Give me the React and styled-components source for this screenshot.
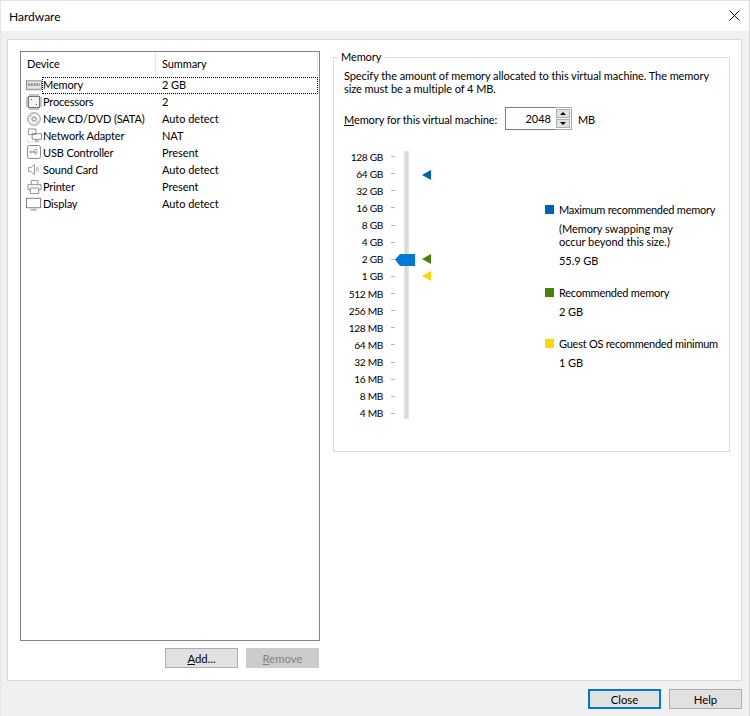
import React from "react";
import styled, { createGlobalStyle } from "styled-components";

const Global = createGlobalStyle`
  html, body { margin: 0; padding: 0; background: #f0f0f0; }
  * { box-sizing: border-box; }
  body { font-family: "Lato", "Open Sans", "Liberation Sans", sans-serif; font-size: 11px; letter-spacing: -0.1px; color: #000; }
`;

const Window = styled.div`
  position: relative; width: 750px; height: 716px; background: #f0f0f0;
  border-left: 1px solid #e6e6e6; border-right: 1px solid #d8d8d8; border-top: 1px solid #e4e4e4;
  display: flex; flex-direction: column; overflow: hidden;
`;
const EdgeMark = styled.i`
  position: absolute; left: -1px; width: 1px; display: block;
  top: ${p => p.$top}px; height: ${p => p.$h}px; background: ${p => p.$c};
`;
const TitleBar = styled.header`
  height: 30px; flex: none; background: #fff; display: flex; align-items: center;
  justify-content: space-between; padding: 0 9px 0 8px;
`;
const Title = styled.h1`margin: 0; font-size: 12px; font-weight: 400; letter-spacing: 0;`;
const CloseX = styled.svg`width: 11px; height: 11px; display: block; margin-top: -1px;`;

const Panel = styled.main`
  margin: 8px 7px 0 6px; height: 642px; flex: none; background: #fff; border: 1px solid #d9d9d9;
  padding: 11px 10px 0 12px; display: flex; gap: 13px;
`;
const LeftCol = styled.section`width: 300px; flex: none; display: flex; flex-direction: column;`;
const List = styled.div`width: 300px; height: 590px; border: 1px solid #82828e; display: flex; flex-direction: column;`;
const HeaderRow = styled.div`display: flex; height: 25px; flex: none;`;
const HeadCell = styled.div`
  width: ${p => p.$w}px; padding-left: 6px; padding-bottom: 1px; display: flex; align-items: center;
  border-right: 1px solid #e5e5e5; margin-bottom: 1px;
`;
const Rows = styled.div`display: flex; flex-direction: column;`;
const Row = styled.div`display: flex; height: 17px; padding-left: 5px; padding-right: 1px; align-items: stretch;`;
const IconBox = styled.span`width: 16px; flex: none; display: flex; align-items: center; padding-bottom: 2px; overflow: visible;`;
const Cells = styled.div`
  flex: 1; display: flex; align-items: center; padding-bottom: 3px;
  border: 1px dotted ${p => (p.$focus ? "#000" : "transparent")};
`;
const NameCell = styled.span`width: 119px; white-space: nowrap; letter-spacing: -0.15px;`;
const SummaryCell = styled.span`white-space: nowrap; letter-spacing: -0.05px;`;

const ListActions = styled.div`display: flex; justify-content: flex-end; gap: 8px; padding: 7px 1px 0 0;`;
const Btn = styled.button`
  width: 73px; height: 20px; padding: 0; font: inherit; font-size: 11.3px; letter-spacing: 0;
  color: ${p => (p.disabled ? "#838383" : "#000")};
  background: ${p => (p.disabled ? "#cccccc" : "#e1e1e1")};
  border: 1px solid ${p => (p.disabled ? "#cccccc" : "#adadad")};
  ${p => p.$primary && "border: 2px solid #0078d7;"}
  display: flex; align-items: center; justify-content: center;
  u { text-decoration: underline; text-underline-offset: 1px; }
`;

const Group = styled.fieldset`
  margin: -1px 0 0 0; width: 397px; height: 402px; border: 1px solid #dcdcdc; padding: 0 10px 0 10px; min-width: 0;
  display: block;
`;
const GroupLabel = styled.legend`padding: 0 3px; margin-left: -6px; line-height: 14px;`;
const Intro = styled.p`margin: 5px 0 0 0; line-height: 13px; width: 380px; letter-spacing: -0.07px;`;
const SpinRow = styled.div`display: flex; align-items: center; margin-top: 12px; height: 23px;`;
const SpinLabel = styled.label`width: 161px; white-space: nowrap; padding-top: 2px; u { text-underline-offset: 1px; }`;
const SpinBox = styled.div`display: flex; width: 67px; height: 23px; border: 1px solid #a8a8a8; margin-right: 6px;`;
const SpinInput = styled.div`
  width: 50px; margin: -1px 0 -1px -1px; border: 1px solid #7a7a7a; border-right: none;
  display: flex; align-items: center; justify-content: flex-end; padding-right: 4px; letter-spacing: 0;
`;
const SpinUnit = styled.span`padding-top: 2px;`;
const SpinBtns = styled.div`flex: 1; display: flex; flex-direction: column; gap: 1px; padding: 1px;`;
const SpinBtn = styled.div`
  flex: 1; background: #e1e1e1; border: 1px solid #adadad; display: flex; align-items: center; justify-content: center;
  &::after { content: ""; border-left: 3px solid transparent; border-right: 3px solid transparent;
    ${p => (p.$up ? "border-bottom: 3px solid #000;" : "border-top: 3px solid #000;")} }
`;

const Chart = styled.div`display: flex; margin-top: 18px; margin-left: -5px;`;
const Scale = styled.div`display: flex; flex-direction: column; width: 56px; flex: none;`;
const ScaleRow = styled.div`height: 17.13px; display: flex; align-items: center; justify-content: flex-end; white-space: nowrap; font-size: 10.2px; letter-spacing: -0.35px;`;
const Tick = styled.span`width: 4px; height: 1px; background: #b5b5b5; margin-left: 8px; flex: none;`;
const TrackCol = styled.div`position: relative; width: 60px; height: 274px; margin-left: 9px; flex: none;`;
const Track = styled.div`position: absolute; left: 0; top: 3px; width: 5px; height: 268px; background: #d9dcdb; border: 1px solid #e4e6e5;`;
const Thumb = styled.svg`position: absolute; left: -9px; top: 105px; width: 20px; height: 13px; display: block;`;
const Marker = styled.span`
  position: absolute; left: 18px; top: ${p => p.$top}px; width: 0; height: 0;
  border-top: 5px solid transparent; border-bottom: 5px solid transparent; border-right: 9px solid ${p => p.$c};
`;

const Legend = styled.div`
  display: flex; flex-direction: column; margin-left: 81px; padding-top: 55px; width: 175px; flex: none;
`;
const LegendItem = styled.div`display: flex; flex-direction: column; margin-bottom: ${p => p.$mb}px;`;
const LegendHead = styled.div`display: flex; align-items: center; height: 13px; white-space: nowrap; letter-spacing: -0.24px;`;
const Swatch = styled.span`width: 9px; height: 9px; background: ${p => p.$c}; margin-right: 5px; flex: none;`;
const LegendText = styled.div`margin: ${p => p.$mt}px 0 0 14px; line-height: 13px; white-space: nowrap; letter-spacing: -0.05px;`;

const Footer = styled.footer`display: flex; justify-content: flex-end; gap: 8px; padding: 8px 7px 0 0;`;

const sw = "#8a8a8a";
const Icons = {
  memory: (
    <svg width="17" height="12" viewBox="0 0 17 12" style={{ marginTop: 2 }}>
      <rect x="0.5" y="0.5" width="16" height="9" fill="#e6e6e6" stroke={sw} />
      <path d="M2 3h2v3H2zM5 3h2v3H5zM8 3h2v3H8zM11 3h2v3h-2zM14 3h1v3h-1z" fill="#8f8f8f" />
      <path d="M1 10.5h15" stroke="#b5b5b5" strokeDasharray="1 1" />
    </svg>
  ),
  cpu: (
    <svg width="16" height="16" viewBox="0 0 16 16">
      <rect x="2.5" y="2.5" width="11" height="11" fill="#f3f3f3" stroke="#777" />
      <path d="M4 0v2M6 0v2M8 0v2M10 0v2M12 0v2M4 14v2M6 14v2M8 14v2M10 14v2M12 14v2M0 4h2M0 6h2M0 8h2M0 10h2M0 12h2M14 4h2M14 6h2M14 8h2M14 10h2M14 12h2" stroke="#8a8a8a" />
      <rect x="5" y="5" width="1" height="1" fill="#555" />
      <rect x="10" y="10" width="1" height="1" fill="#555" />
    </svg>
  ),
  cd: (
    <svg width="16" height="16" viewBox="0 0 16 16" style={{ marginLeft: 1 }}>
      <circle cx="7.5" cy="8" r="6.7" fill="#f2f2f2" stroke={sw} />
      <circle cx="7.5" cy="8" r="2.2" fill="#fff" stroke="#777" />
      <path d="M3.5 6a4.5 4.5 0 0 1 2-2M9.5 12a4.500 4.500 0 0 0 2-2" stroke="#b0b0b0" fill="none" />
    </svg>
  ),
  net: (
    <svg width="15" height="15" viewBox="0 0 16 15" style={{ marginLeft: 1 }}>
      <path d="M1.500 0.500h8v6h-8zM5.500 5.500h10v6h-10z" fill="#fff" stroke={sw} />
      <path d="M10 11.500v2M8 13.500h5" stroke={sw} />
      <path d="M0 9.500v5h6" stroke="#aaa" strokeDasharray="1 1" fill="none" />
    </svg>
  ),
  usb: (
    <svg width="15" height="15" viewBox="0 0 15 15" style={{ marginLeft: 1 }}>
      <rect x="0.5" y="0.5" width="13" height="13" rx="2" fill="#fff" stroke={sw} />
      <path d="M3 7h8M6 7l2-2.500h2M7 7l1.500 2H10" stroke="#8c8c8c" fill="none" />
      <circle cx="3.500" cy="7" r="1" fill="#8c8c8c" />
    </svg>
  ),
  sound: (
    <svg width="13" height="11" viewBox="0 0 15 13" style={{ marginLeft: 2 }}>
      <path d="M0.500 4h3l4-3.500v12l-4-3.500h-3z" fill="#fff" stroke={sw} />
      <path d="M9.500 4q1 2.500 0 5M11.500 3q1.500 3.500 0 7" stroke="#a0a0a0" fill="none" />
    </svg>
  ),
  printer: (
    <svg width="15" height="14" viewBox="0 0 16 15" style={{ marginLeft: 1 }}>
      <path d="M4.500 5V0.500h7V5" fill="#fff" stroke={sw} />
      <path d="M3.500 10.500h-2.500v-5.500h14v5.500h-2.500" fill="#fff" stroke={sw} />
      <path d="M3.500 8.500h9v6h-9z" fill="#fff" stroke={sw} />
    </svg>
  ),
  display: (
    <svg width="18" height="15" viewBox="0 0 18 15" style={{ marginTop: 1 }}>
      <rect x="0.500" y="0.500" width="16" height="10.500" fill="#fff" stroke="#6f6f6f" />
      <rect x="1.500" y="11" width="14" height="1" fill="#c9c9c9" />
      <path d="M5 13.500h7" stroke="#a0a0a0" strokeWidth="1.500" />
    </svg>
  ),
};

const devices = [
  ["memory", "Memory", "2 GB"],
  ["cpu", "Processors", "2"],
  ["cd", "New CD/DVD (SATA)", "Auto detect"],
  ["net", "Network Adapter", "NAT"],
  ["usb", "USB Controller", "Present"],
  ["sound", "Sound Card", "Auto detect"],
  ["printer", "Printer", "Present"],
  ["display", "Display", "Auto detect"],
];
const sizes = ["128 GB","64 GB","32 GB","16 GB","8 GB","4 GB","2 GB","1 GB","512 MB","256 MB","128 MB","64 MB","32 MB","16 MB","8 MB","4 MB"];

export default function App() {
  return (
    <>
      <Global />
      <Window>
        <EdgeMark $top={141} $h={36} $c="#3f6fb0" />
        <EdgeMark $top={631} $h={2} $c="#555" />
        <EdgeMark $top={682} $h={10} $c="#a0525c" />
        <TitleBar>
          <Title>Hardware</Title>
          <CloseX viewBox="0 0 11 11"><path d="M0.500 0.500l10 10M10.500 0.500l-10 10" stroke="#111" fill="none" /></CloseX>
        </TitleBar>
        <Panel>
          <LeftCol>
            <List>
              <HeaderRow>
                <HeadCell $w={135}>Device</HeadCell>
                <HeadCell $w={162}>Summary</HeadCell>
              </HeaderRow>
              <Rows>
                {devices.map(([k, n, s], i) => (
                  <Row key={n}>
                    <IconBox>{Icons[k]}</IconBox>
                    <Cells $focus={i === 0}>
                      <NameCell>{n}</NameCell>
                      <SummaryCell>{s}</SummaryCell>
                    </Cells>
                  </Row>
                ))}
              </Rows>
            </List>
            <ListActions>
              <Btn><span><u>A</u>dd...</span></Btn>
              <Btn disabled><span><u>R</u>emove</span></Btn>
            </ListActions>
          </LeftCol>
          <Group>
            <GroupLabel>Memory</GroupLabel>
            <Intro>Specify the amount of memory allocated to this virtual machine. The memory size must be a multiple of 4 MB.</Intro>
            <SpinRow>
              <SpinLabel><u>M</u>emory for this virtual machine:</SpinLabel>
              <SpinBox>
                <SpinInput>2048</SpinInput>
                <SpinBtns><SpinBtn $up /><SpinBtn /></SpinBtns>
              </SpinBox>
              <SpinUnit>MB</SpinUnit>
            </SpinRow>
            <Chart>
              <Scale>
                {sizes.map((s, i) => (
                  <ScaleRow key={i}>{s}<Tick /></ScaleRow>
                ))}
              </Scale>
              <TrackCol>
                <Track />
                <Marker $top={22} $c="#0063b1" />
                <Marker $top={106} $c="#498205" />
                <Marker $top={123} $c="#ffd800" />
                <Thumb viewBox="0 0 20 13"><path d="M0 6.500L5 1h15v12H5z" fill="#0078d7" /></Thumb>
              </TrackCol>
              <Legend>
                <LegendItem $mb={19}>
                  <LegendHead><Swatch $c="#0063b1" />Maximum recommended memory</LegendHead>
                  <LegendText $mt={6}>(Memory swapping may<br />occur beyond this size.)</LegendText>
                  <LegendText $mt={6}>55.9 GB</LegendText>
                </LegendItem>
                <LegendItem $mb={19}>
                  <LegendHead><Swatch $c="#498205" />Recommended memory</LegendHead>
                  <LegendText $mt={6}>2 GB</LegendText>
                </LegendItem>
                <LegendItem $mb={0}>
                  <LegendHead><Swatch $c="#ffd800" />Guest OS recommended minimum</LegendHead>
                  <LegendText $mt={6}>1 GB</LegendText>
                </LegendItem>
              </Legend>
            </Chart>
          </Group>
        </Panel>
        <Footer>
          <Btn $primary>Close</Btn>
          <Btn>Help</Btn>
        </Footer>
      </Window>
    </>
  );
}
